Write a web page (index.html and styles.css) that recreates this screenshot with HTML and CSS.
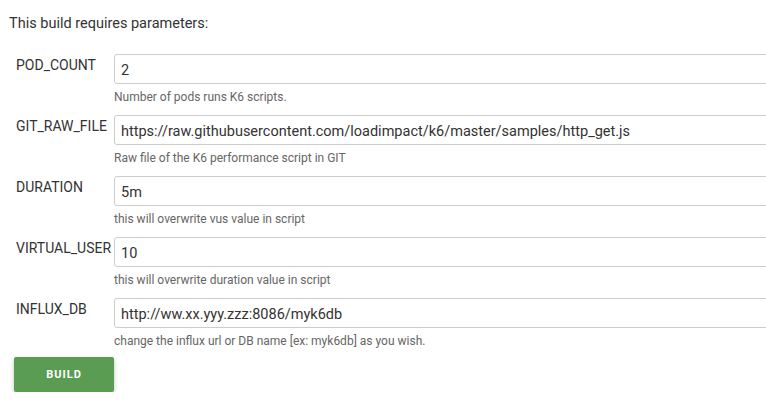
FILE: index.html
```html
<!DOCTYPE html>
<html>
<head>
<meta charset="utf-8">
<link rel="stylesheet" href="styles.css">
</head>
<body>
<div class="page">
  <p class="intro">This build requires parameters:</p>
  <div class="params">
    <div class="param">
      <div class="label">POD_COUNT</div>
      <div class="field">
        <input class="input" type="text" value="2">
        <div class="desc">Number of pods runs K6 scripts.</div>
      </div>
    </div>
    <div class="param">
      <div class="label">GIT_RAW_FILE</div>
      <div class="field">
        <input class="input" type="text" value="https://raw.githubusercontent.com/loadimpact/k6/master/samples/http_get.js">
        <div class="desc">Raw file of the K6 performance script in GIT</div>
      </div>
    </div>
    <div class="param">
      <div class="label">DURATION</div>
      <div class="field">
        <input class="input" type="text" value="5m">
        <div class="desc">this will overwrite vus value in script</div>
      </div>
    </div>
    <div class="param">
      <div class="label">VIRTUAL_USER</div>
      <div class="field">
        <input class="input" type="text" value="10">
        <div class="desc">this will overwrite duration value in script</div>
      </div>
    </div>
    <div class="param">
      <div class="label">INFLUX_DB</div>
      <div class="field">
        <input class="input" type="text" value="http://ww.xx.yyy.zzz:8086/myk6db">
        <div class="desc">change the influx url or DB name [ex: myk6db] as you wish.</div>
      </div>
    </div>
  </div>
  <button class="build" type="button">Build</button>
</div>
</body>
</html>
```

FILE: styles.css
```css
html, body {
  margin: 0;
  padding: 0;
  overflow: hidden;
  background: #fff;
}
body {
  font-family: Roboto, "Liberation Sans", sans-serif;
  color: #333;
}
.page {
  padding: 14px 8px 0 8px;
  width: 900px;
}
.intro {
  margin: 0 0 0 1px;
  font-size: 14.5px;
  line-height: 20px;
  color: #333;
}
.params {
  display: flex;
  flex-direction: column;
  gap: 10px;
  margin-top: 20px;
}
.param {
  display: flex;
  align-items: flex-start;
}
.label {
  width: 106px;
  flex: none;
  padding-left: 8px;
  padding-top: 1px;
  box-sizing: border-box;
  font-size: 14px;
  line-height: 20px;
  color: #333;
  white-space: nowrap;
}
.field {
  flex: 1;
  display: flex;
  flex-direction: column;
}
.input {
  box-sizing: border-box;
  width: 100%;
  height: 30px;
  border: 1px solid #ccc;
  border-radius: 3px;
  padding: 2px 6px 0 6px;
  font-family: Roboto, "Liberation Sans", sans-serif;
  font-size: 14.5px;
  color: #333;
  background: #fff;
  outline: none;
}
.desc {
  font-size: 12px;
  line-height: 16px;
  color: #666;
  margin-top: 5px;
}
.build {
  margin: 8px 0 0 6px;
  width: 100px;
  height: 35px;
  border: none;
  border-radius: 2px;
  background: #5a9c52;
  color: #fff;
  font-family: Roboto, "Liberation Sans", sans-serif;
  font-size: 11px;
  font-weight: 700;
  letter-spacing: 1px;
  text-transform: uppercase;
  box-shadow: 0 2px 4px rgba(0,0,0,0.25);
}
```
